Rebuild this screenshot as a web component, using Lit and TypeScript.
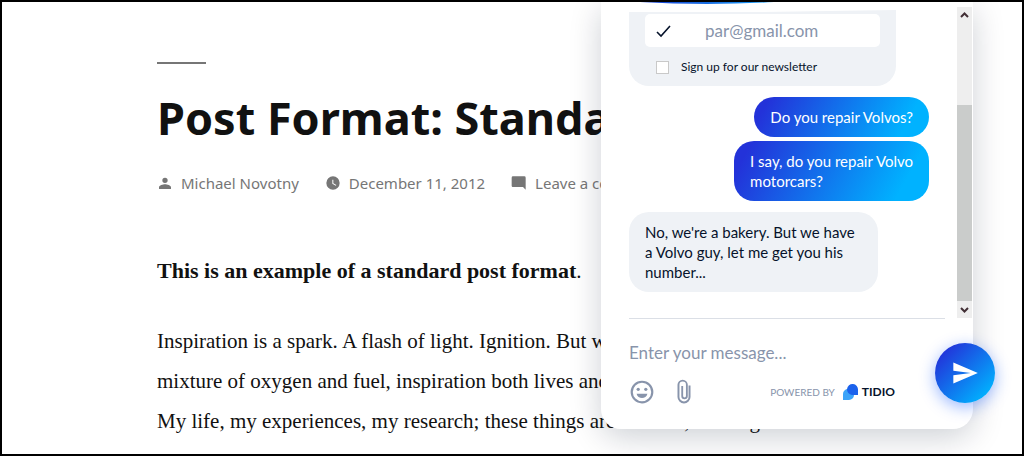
import { LitElement, html, css } from "lit";
import { customElement, state } from "lit/decorators.js";

@customElement("blog-post")
export class BlogPost extends LitElement {
  static styles = css`
    :host { display: block; color: #111; padding: 60px 0 0 155px; }
    .rule { width: 49px; height: 2px; background: #767676; margin: 0 0 29px; border: 0; }
    h1 { margin: 0; font: 700 45px/50px "Noto Sans", "Open Sans", sans-serif; white-space: nowrap; }
    .meta { display: flex; gap: 26px; margin-top: 30px; color: #767676; font: 15px/20px "Noto Sans", sans-serif; white-space: nowrap; }
    .meta span { display: flex; align-items: center; gap: 8px; }
    .meta svg { width: 16px; height: 16px; fill: #767676; }
    .body { font: 21px/40px "Liberation Serif", serif; margin-top: 58px; white-space: nowrap; }
    .body p { margin: 0 0 30px; }
    .body strong { font-size: 22px; line-height: 40px; }
  `;
  render() {
    return html`<article>
      <hr class="rule" />
      <h1>Post Format: Standard</h1>
      <div class="meta">
        <span><svg viewBox="0 0 24 24"><path d="M12 12a4 4 0 1 0 0-8 4 4 0 0 0 0 8zm0 2c-3 0-9 1.500-9 4.500V21h18v-2.500C21 15.500 15 14 12 14z" /></svg>Michael Novotny</span>
        <span><svg viewBox="0 0 24 24"><path fill-rule="evenodd" d="M12 2a10 10 0 1 0 0 20 10 10 0 0 0 0-20zm4.200 14.200L11 13V7h1.500v5.200l4.500 2.700z" /></svg>December 11, 2012</span>
        <span><svg viewBox="0 0 24 24"><path d="M22 4a2 2 0 0 0-2-2H3a2 2 0 0 0-2 2v12c0 1.100.9 2 2 2h15l4 4z" /></svg>Leave a comment</span>
      </div>
      <div class="body">
        <p><strong>This is an example of a standard post format</strong>.</p>
        <p>Inspiration is a spark. A flash of light. Ignition. But with just the right<br />
          mixture of oxygen and fuel, inspiration both lives and dies here.<br />
          My life, my experiences, my research; these things are the fuel, burning<br />
          blog would like to build me. I started to think what led me to this. I</p>
      </div>
    </article>`;
  }
}

@customElement("chat-widget")
export class ChatWidget extends LitElement {
  @state() private email = "par@gmail.com";
  static styles = css`
    :host { display: flex; flex-direction: column; box-sizing: border-box; color: #06132b; background: #fff; border-radius: 0 0 20px 20px; box-shadow: 0 8px 32px rgba(0, 18, 46, 0.2); font: 15px/20px Lato, sans-serif; }
    .scroll { display: flex; height: 316px; }
    .log { flex: 1; display: flex; flex-direction: column; padding: 0 28px; overflow: hidden; }
    .arc { flex: none; height: 8px; overflow: visible; display: block; margin: 0 -28px; }
    .form { flex: none; width: 267px; height: 76px; box-sizing: border-box; background: #eff2f6; border-radius: 0 0 20px 20px; padding: 4px 16px; display: flex; flex-direction: column; gap: 12px; clip-path: polygon(0 2px, 50% 2px, 100% 0, 100% 100%, 0 100%); }
    .field { display: flex; align-items: center; gap: 32px; background: #fff; border-radius: 5px; height: 33px; padding-left: 10px; }
    .field svg { width: 18px; height: 18px; fill: none; stroke: #06132b; stroke-width: 1.600; }
    .field input { border: 0; outline: 0; background: none; padding: 0; font: 17px/24px Lato, sans-serif; color: #8894ab; width: 160px; }
    .tick { display: flex; align-items: center; gap: 12px; font-size: 12px; line-height: 16px; padding-left: 11px; }
    .tick input { appearance: none; width: 13px; height: 13px; margin: 0; border: 1px solid #c9c9c9; background: #fff; }
    .bubble { flex: none; border-radius: 20px; padding: 10px 16px; margin: 0; }
    .mine { align-self: flex-end; color: #fff; background: linear-gradient(119deg, #2332d9 8%, #00b2ff 85%); margin-bottom: 4px; }
    .theirs { align-self: flex-start; box-sizing: border-box; min-width: 249px; background: #eff2f6; margin-top: 7px; }
    .first { margin-top: 11px; }
    .bar { width: 15px; margin: 5px 1px 0 0; background: #eee; display: flex; flex-direction: column; }
    .bar button { border: 0; padding: 0; height: 17px; background: none; display: grid; place-items: center; }
    .bar svg { width: 9px; height: 9px; fill: none; stroke: #422f35; stroke-width: 2; }
    .thumb { height: 196px; margin-top: auto; background: #cacccb; }
    .compose { margin: 0 28px; border-top: 1px solid #dbdfe6; padding: 22px 0 24px; display: flex; flex-direction: column; gap: 14px; }
    .compose .msg { border: 0; outline: 0; padding: 0; height: 24px; font: 17px/24px Lato, sans-serif; color: #06132b; background: none; width: 280px; }
    .msg::placeholder { color: #8894ab; opacity: 1; }
    .tools { display: flex; align-items: center; height: 26px; }
    .icon { border: 0; background: none; padding: 0; width: 26px; height: 26px; margin-right: 16px; display: block; }
    .icon svg { display: block; width: 26px; height: 26px; fill: #8894ab; }
    .powered { margin-left: auto; margin-right: 50px; display: flex; align-items: center; gap: 7px; color: #8894ab; font-size: 10px; text-decoration: none; white-space: nowrap; }
    .brand { display: flex; align-items: center; gap: 3px; color: #06132b; font: 700 12px/16px Lato, sans-serif; }
    .brand svg { width: 17px; height: 17px; }
    .send { position: absolute; right: -22px; bottom: 26px; width: 60px; height: 60px; border: 0; padding: 0; border-radius: 50%; display: grid; place-items: center; background: linear-gradient(135deg, #2332d9 12%, #00b2ff 88%); box-shadow: 0 4px 16px rgba(0, 77, 255, 0.4); }
    .send svg { width: 28px; height: 28px; fill: #fff; }
  `;
  render() {
    return html`
      <div class="scroll">
        <div class="log">
          <svg class="arc" viewBox="0 0 356 8"><defs><linearGradient id="h"><stop stop-color="#163ad0" /><stop offset="1" stop-color="#18a0f5" /></linearGradient></defs><path d="M39 0h134Q106 4 39 0z" fill="url(#h)" /></svg>
          <div class="form">
            <div class="field"><svg viewBox="0 0 18 18"><path d="M2 10l4 4L15 4" /></svg><input type="email" aria-label="Email" .value=${this.email} /></div>
            <label class="tick"><input type="checkbox" />Sign up for our newsletter</label>
          </div>
          <p class="bubble mine first">Do you repair Volvos?</p>
          <p class="bubble mine">I say, do you repair Volvo<br />motorcars?</p>
          <p class="bubble theirs">No, we're a bakery. But we have<br />a Volvo guy, let me get you his<br />number...</p>
        </div>
        <div class="bar">
          <button aria-label="Scroll up"><svg viewBox="0 0 9 9"><path d="M1 6l3.500-3.500L8 6" /></svg></button>
          <div class="thumb"></div>
          <button aria-label="Scroll down"><svg viewBox="0 0 9 9"><path d="M1 3l3.500 3.500L8 3" /></svg></button>
        </div>
      </div>
      <div class="compose">
        <input class="msg" type="text" aria-label="Message" placeholder="Enter your message..." />
        <div class="tools">
          <button class="icon" aria-label="Emoji"><svg viewBox="0 0 24 24"><path fill-rule="evenodd" d="M12 1.500a10.500 10.500 0 1 0 0 21 10.500 10.500 0 0 0 0-21zm0 2a8.500 8.500 0 1 1 0 17 8.500 8.500 0 0 1 0-17z" /><circle cx="8.500" cy="9.500" r="1.500" /><circle cx="15.500" cy="9.500" r="1.500" /><path d="M7 13.500h10c-.7 2.800-2.600 4-5 4s-4.300-1.200-5-4z" /></svg></button>
          <button class="icon" aria-label="Attach file"><svg viewBox="0 0 24 24"><path d="M6 6.500v10a6 6 0 0 0 12 0V6h-1.800v10.500a4.200 4.200 0 0 1-8.400 0V5.400a3 3 0 0 1 6 0v10.400a1.300 1.300 0 0 1-2.600 0V6.500H9.500v9.300a3 3 0 0 0 6 0V5.400a4.700 4.700 0 0 0-9.500 0z" /></svg></button>
          <a class="powered" href="#">POWERED BY<span class="brand"><svg viewBox="0 0 17 17"><path d="M1 16V10a5 5 0 0 1 5-5h2a5 5 0 0 1 4 6 5 5 0 0 1-5 5z" fill="#3ba3f8" /><path d="M16 11V6a5.500 5.500 0 1 0-6 5z" fill="#1b62ec" /></svg>TIDIO</span></a>
        </div>
      </div>
      <button class="send" aria-label="Send"><svg viewBox="0 0 24 24"><path d="M2 21l21-9L2 3v7l15 2-15 2z" /></svg></button>`;
  }
}

@customElement("app-root")
export class AppRoot extends LitElement {
  static styles = css`
    :host { display: block; position: relative; box-sizing: border-box; height: 100vh; min-height: 240px; border: 2px solid #000; overflow: hidden; background: #fff; }
    chat-widget { position: absolute; top: 0; right: 49px; width: 372px; }
  `;
  render() {
    return html`<blog-post></blog-post><chat-widget></chat-widget>`;
  }
}
